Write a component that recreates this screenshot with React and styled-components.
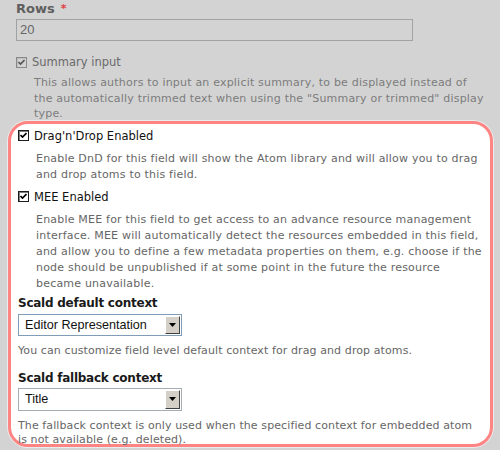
import React from 'react'
import styled, { createGlobalStyle } from 'styled-components';

const GlobalStyle = createGlobalStyle`
  html, body {
    margin: 0;
    padding: 0;
    background: #d3d3d3;
  }
  body {
    font-family: "DejaVu Sans", Verdana, sans-serif;
    font-size: 11px;
    color: #222;
    overflow: hidden;
  }
`;

const Page = styled.div`
  width: 500px;
  height: 450px;
  padding: 1px 7px 0 8px;
  box-sizing: border-box;
  display: flex;
  flex-direction: column;
`;

const Dimmed = styled.div`
  padding: 0 8px;
`;

const FieldLabel = styled.div`
  font-weight: bold;
  font-size: ${p => p.$dim ? '13px' : '12px'};
  letter-spacing: ${p => p.$dim ? '0' : '-0.25px'};
  line-height: 16px;
  color: ${p => p.$dim ? '#5f5f5f' : '#1a1a1a'};
  margin-top: ${p => p.$top || 0}px;
  white-space: nowrap;
`;

const Required = styled.span`
  color: #e04040;
  font-size: 11px;
  vertical-align: top;
  margin-left: 6px;
`;

const TextInput = styled.div`
  width: 397px;
  height: 22px;
  box-sizing: border-box;
  border: 1px solid #a2a2a2;
  margin-top: 2px;
  padding: 0 3px;
  font-family: "Liberation Sans", Arial, sans-serif;
  font-size: 13px;
  line-height: 20px;
  color: #666;
`;

const CheckRow = styled.label`
  display: flex;
  align-items: center;
  gap: 5px;
  height: 16px;
  margin-top: ${p => p.$top}px;
  font-size: 11.5px;
  color: ${p => p.$dim ? '#6a6a6a' : '#111'};
  white-space: nowrap;
`;

const Box = styled.span`
  width: 11px;
  height: 11px;
  box-sizing: border-box;
  border: 1px solid ${p => p.$dim ? '#8a8a8a' : '#1c1c1c'};
  background: ${p => p.$dim ? '#d3d3d3' : '#fff'};
  box-shadow: inset 1px 1px 0 ${p => p.$dim ? '#bdbdbd' : '#808080'};
  display: flex;
  align-items: center;
  justify-content: center;
  flex: none;
`;

const Description = styled.div`
  margin: ${p => p.$gap}px 0 0 18px;
  font-size: 11px;
  line-height: ${p => p.$lh || 16}px;
  letter-spacing: 0.2px;
  color: ${p => p.$dim ? '#7c7c7c' : '#666'};
  white-space: nowrap;
`;

const Plain = styled.div`
  margin-top: ${p => p.$gap}px;
  font-size: 11px;
  line-height: 14px;
  letter-spacing: 0.1px;
  color: #666;
  white-space: nowrap;
`;

const Highlight = styled.div`
  margin-top: -1px;
  flex: 1;
  margin-bottom: 3px;
  background: #fff;
  border: 3px solid #ff8585;
  border-radius: 20px;
  box-shadow: 0 0 0 1px #ececec;
  padding: 2px 7px 0 7px;
  min-height: 0;
`;

const Select = styled.div`
  width: 164px;
  height: ${p => p.$focus ? 22 : 23}px;
  margin-top: ${p => p.$top}px;
  box-sizing: border-box;
  border: 1px solid ${p => p.$focus ? '#7f9db9' : '#a5acb2'};
  display: flex;
  align-items: stretch;
  background: #fff;
  font-family: "Liberation Sans", Arial, sans-serif;
  font-size: 12.6px;
`;

const SelectValue = styled.span`
  flex: 1;
  padding-left: 6px;
  line-height: 20px;
  color: #111;
`;

const SelectButton = styled.span`
  width: 15px;
  margin: 1px;
  box-sizing: border-box;
  background: #d4d0c8;
  border: 1px solid;
  border-color: #fff #404040 #404040 #fff;
  display: flex;
  align-items: center;
  justify-content: center;
`;

const Check = ({ dim }) => (
  <Box $dim={dim}>
    <svg width="7" height="7" viewBox="0 0 7 7">
      <path d="M0.5 3 L2.5 5 L6.5 1" fill="none" stroke={dim ? '#555' : '#000'} strokeWidth="1.6" />
    </svg>
  </Box>
);

const Arrow = () => (
  <svg width="7" height="4" viewBox="0 0 7 4">
    <path d="M0 0 H7 L3.5 4 Z" fill="#000" />
  </svg>
);

const App = () => {
  return (
    <>
      <GlobalStyle />
      <Page>
        <Dimmed>
          <FieldLabel $dim>Rows<Required>*</Required></FieldLabel>
          <TextInput>20</TextInput>
          <CheckRow $dim $top={13}><Check dim />Summary input</CheckRow>
          <Description $dim $gap={5} $lh={15.5}>
            This allows authors to input an explicit summary, to be displayed instead of<br />
            the automatically trimmed text when using the "Summary or trimmed" display<br />
            type.
          </Description>
        </Dimmed>
        <Highlight>
          <CheckRow $top={2}><Check />Drag'n'Drop Enabled</CheckRow>
          <Description $gap={7}>
            Enable DnD for this field will show the Atom library and will allow you to drag<br />
            and drop atoms to this field.
          </Description>
          <CheckRow $top={6}><Check />MEE Enabled</CheckRow>
          <Description $gap={7}>
            Enable MEE for this field to get access to an advance resource management<br />
            interface. MEE will automatically detect the resources embedded in this field,<br />
            and allow you to define a few metadata properties on them, e.g. choose if the<br />
            node should be unpublished if at some point in the future the resource<br />
            became unavailable.
          </Description>
          <FieldLabel $top={3}>Scald default context</FieldLabel>
          <Select $focus $top={3}>
            <SelectValue>Editor Representation</SelectValue>
            <SelectButton><Arrow /></SelectButton>
          </Select>
          <Plain $gap={8}>You can customize field level default context for drag and drop atoms.</Plain>
          <FieldLabel $top={12}>Scald fallback context</FieldLabel>
          <Select $top={2}>
            <SelectValue>Title</SelectValue>
            <SelectButton><Arrow /></SelectButton>
          </Select>
          <Plain $gap={8}>
            The fallback context is only used when the specified context for embedded atom<br />
            is not available (e.g. deleted).
          </Plain>
        </Highlight>
      </Page>
    </>
  )
}

export default App;
